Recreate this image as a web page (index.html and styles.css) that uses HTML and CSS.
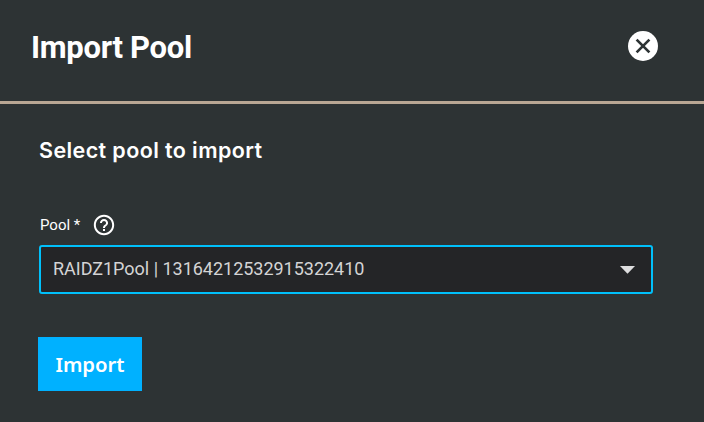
FILE: index.html
```html
<!DOCTYPE html>
<html lang="en">
<head>
<meta charset="utf-8">
<title>Import Pool</title>
<link rel="stylesheet" href="styles.css">
</head>
<body>
<main class="panel">
  <header class="panel-header">
    <h1 class="title">Import Pool</h1>
    <button class="close" aria-label="Close">
      <svg width="30" height="30" viewBox="0 0 30 30"><circle cx="15" cy="15" r="15" fill="#fff"/><path d="M8.6 8.6 21.4 21.4M21.4 8.6 8.6 21.4" stroke="#2d3334" stroke-width="2.7"/></svg>
    </button>
  </header>
  <form class="form">
    <h2 class="subtitle">Select pool to import</h2>
    <div class="label-row">
      <span class="label">Pool <span class="required">*</span></span>
      <svg class="help" width="22" height="22" viewBox="1.2 1.2 21.6 21.6"><path fill="#fff" d="M11 18h2v-2h-2v2zm1-16C6.48 2 2 6.48 2 12s4.480 10 10 10 10-4.480 10-10S17.520 2 12 2zm0 18c-4.410 0-8-3.590-8-8s3.590-8 8-8 8 3.590 8 8-3.590 8-8 8zm0-14c-2.210 0-4 1.790-4 4h2c0-1.100.9-2 2-2s2 .9 2 2c0 2-3 1.750-3 5h2c0-2.250 3-2.500 3-5 0-2.210-1.790-4-4-4z"/></svg>
    </div>
    <div class="select">
      <span class="value">RAIDZ1Pool | 13164212532915322410</span>
      <svg class="caret" width="15" height="8" viewBox="0 0 15 8"><path d="M0 0h15L7.500 7.700z" fill="#dededf"/></svg>
    </div>
    <button class="submit" type="button"><span class="submit-text">Import</span></button>
  </form>
</main>
</body>
</html>
```
FILE: styles.css
```css
* { box-sizing: border-box; }
body { margin: 0; background: #2d3334; color: #fff; font-family: Roboto, sans-serif; }
.panel { height: 422px; overflow: hidden; }
.panel-header {
  height: 104px;
  padding: 31px 46px 0 31px;
  display: flex;
  align-items: flex-start;
  justify-content: space-between;
  border-bottom: 3px solid #b9a794;
}
.title {
  margin: -4px 0 0;
  font: 700 31px/42px Roboto, sans-serif;
  letter-spacing: -.3px;
  white-space: nowrap;
}
.close { width: 30px; height: 30px; padding: 0; border: 0; background: none; }
.close svg { display: block; }
.form { padding: 31px 51px 0 39px; }
.subtitle { margin: 0; font: 600 21.500px/30px Inter, sans-serif; letter-spacing: .4px; white-space: nowrap; }
.label-row { display: flex; align-items: center; height: 22px; margin: 49px 0 9px; padding-left: 1px; }
.label { width: 53px; font-size: 15px; white-space: nowrap; }
.help { display: block; }
.select {
  height: 49px;
  padding: 0 16px 2px 12px;
  display: flex;
  align-items: center;
  justify-content: space-between;
  border: 2px solid #00c0fa;
  border-radius: 3px;
  background: #242527;
  color: #d4d4d5;
  font-size: 18px;
}
.value { letter-spacing: -.02px; }
.caret { margin-top: 2px; }
.submit {
  display: flex;
  align-items: center;
  justify-content: center;
  width: 104px;
  height: 54px;
  margin: 43px 0 0 -1px;
  padding: 0;
  border: 0;
  background: #00b1ff;
  color: #fff;
  font: 600 20.300px/30px "Noto Sans", sans-serif;
}
```
